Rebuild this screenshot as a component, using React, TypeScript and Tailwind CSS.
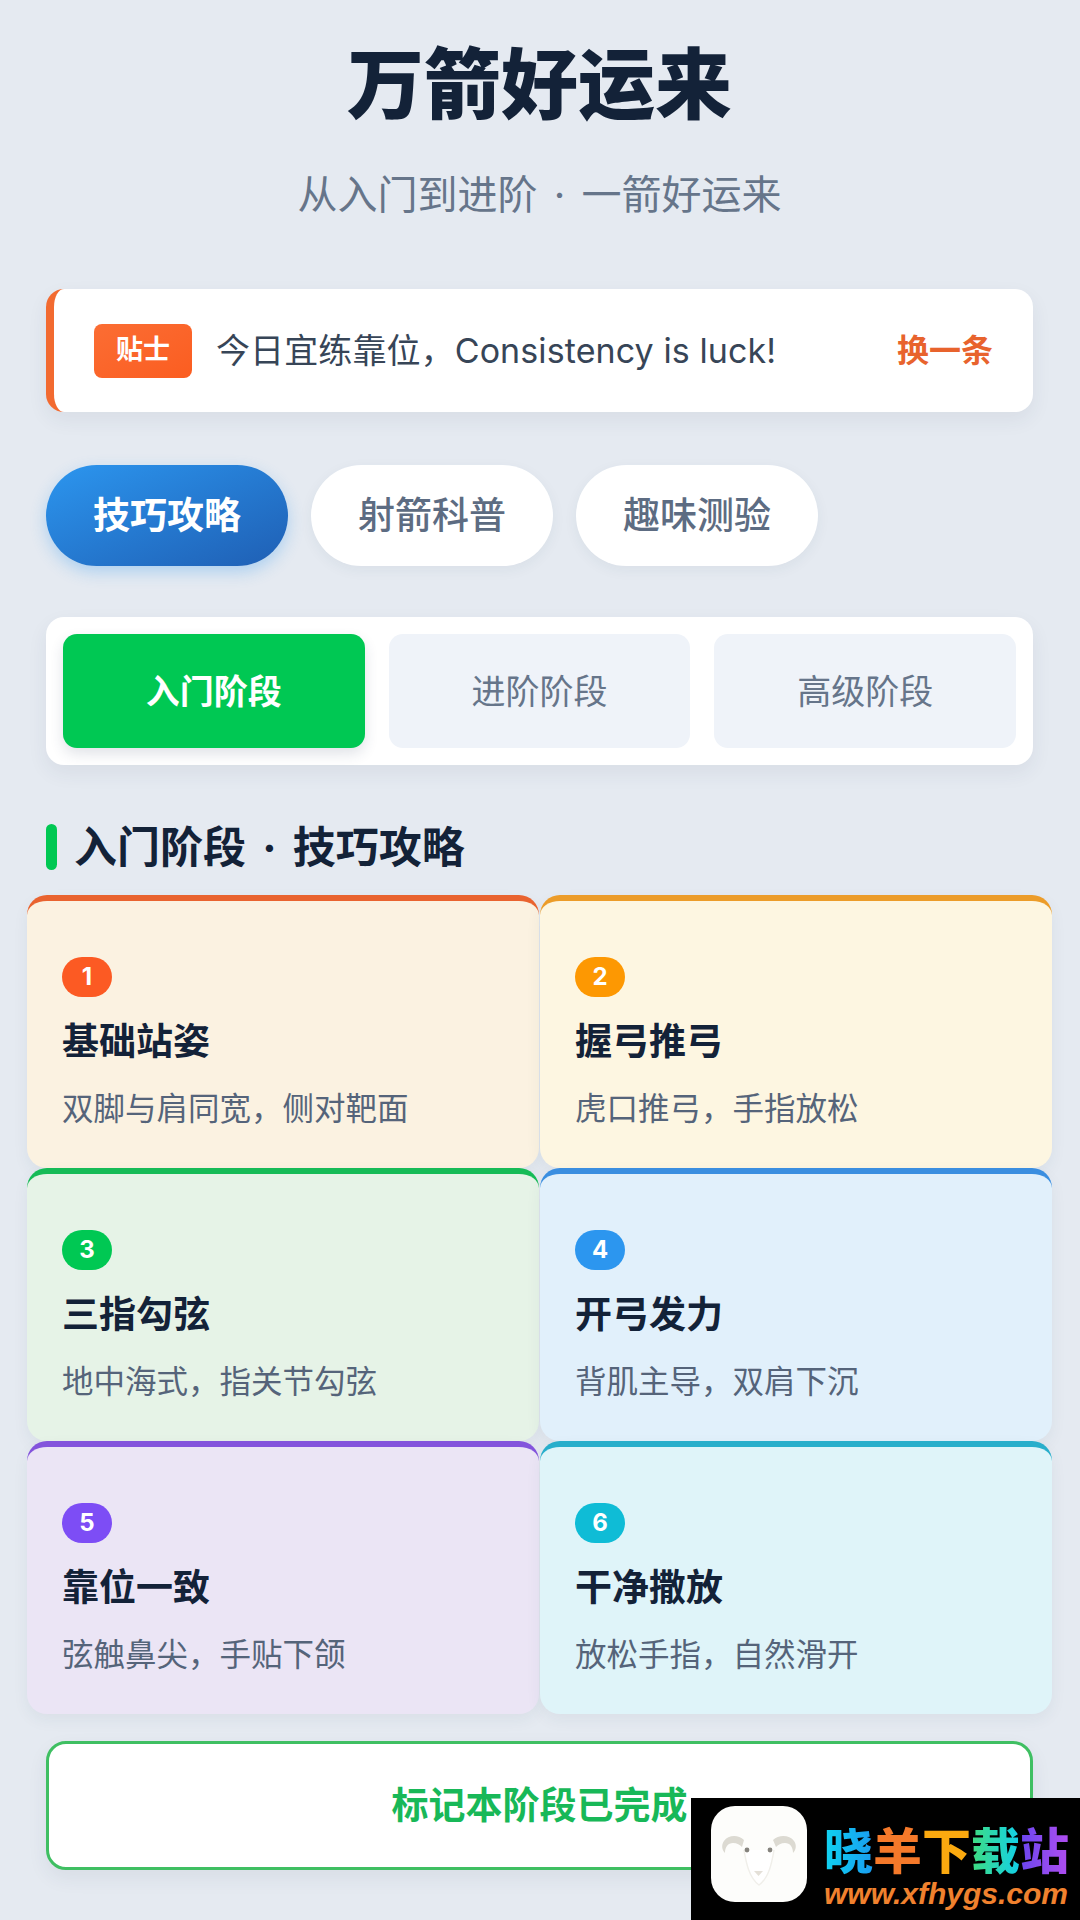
const tabs = ["技巧攻略", "射箭科普", "趣味测验"];
const stages = ["入门阶段", "进阶阶段", "高级阶段"];

const cards = [
  { n: 1, title: "基础站姿", desc: "双脚与肩同宽，侧对靶面", bg: "bg-[#fbf2e1]", top: "border-t-[#e9632f]", badge: "bg-[#fc5a23]" },
  { n: 2, title: "握弓推弓", desc: "虎口推弓，手指放松", bg: "bg-[#fdf6e1]", top: "border-t-[#ec9c29]", badge: "bg-[#fd9802]" },
  { n: 3, title: "三指勾弦", desc: "地中海式，指关节勾弦", bg: "bg-[#e6f3e7]", top: "border-t-[#16bb57]", badge: "bg-[#00c853]" },
  { n: 4, title: "开弓发力", desc: "背肌主导，双肩下沉", bg: "bg-[#e1f0fb]", top: "border-t-[#3a8ee0]", badge: "bg-[#2c96ef]" },
  { n: 5, title: "靠位一致", desc: "弦触鼻尖，手贴下颌", bg: "bg-[#ebe5f5]", top: "border-t-[#8354dc]", badge: "bg-[#7d4df5]" },
  { n: 6, title: "干净撒放", desc: "放松手指，自然滑开", bg: "bg-[#dff4f9]", top: "border-t-[#28aecb]", badge: "bg-[#0fbcd6]" },
];

const SheepLogo = () => (
  <svg viewBox="0 0 96 96" className="w-24 h-24 shrink-0">
    <rect width="96" height="96" rx="24" fill="#fdfdfb" />
    <path d="M33 34c-6-6-16-5-20 1-3 4-2 9 1 12 0-6 3-10 8-10 4 0 7 2 9 4z" fill="#dcdad2" />
    <path d="M62 34c6-6 17-5 21 1 3 4 2 9-1 12 0-6-3-10-8-10-4 0-7 2-9 4z" fill="#dcdad2" />
    <path d="M33 44c2 12 5 28 15 35 10-7 13-23 15-35" fill="#ffffff" stroke="#f0efea" strokeWidth="1.5" />
    <circle cx="36" cy="44" r="2.4" fill="#85837d" />
    <circle cx="59" cy="44" r="2.4" fill="#85837d" />
    <path d="M43 65h9l-4.500 5z" fill="#e4e0d8" />
  </svg>
);

const Watermark = () => (
  <div className="absolute right-0 bottom-0 w-[389px] h-[122px] bg-black flex items-start pl-[20px] pt-[8px] gap-[17px]">
    <SheepLogo />
    <div className="flex flex-col pt-[19px]">
      <div className="flex text-[49px] leading-[54px] font-black">
        <span className="bg-linear-to-r from-[#12d3f0] to-[#1a9cf0] bg-clip-text text-transparent">晓</span>
        <span className="text-[#f5792a]">羊</span>
        <span className="text-[#fba90f]">下</span>
        <span className="bg-linear-to-r from-[#3fdc7c] to-[#12cfe8] bg-clip-text text-transparent">载</span>
        <span className="bg-linear-to-r from-[#6a45ee] to-[#b04cf0] bg-clip-text text-transparent">站</span>
      </div>
      <div className="text-[30px] leading-[30px] font-bold italic text-[#f0812e] font-['Liberation_Sans'] whitespace-nowrap">
        www.xfhygs.com
      </div>
    </div>
  </div>
);

const App = () => {
  return (
    <div className="relative w-[1080px] h-[1920px] overflow-hidden bg-[#e5eaf1] font-['Inter','Noto_Sans_CJK_SC',sans-serif]">
      <div className="pl-[46px] pr-[47px] pt-[35px]">
        <h1 className="text-center text-[77px] leading-[100px] font-black text-[#132238]">万箭好运来</h1>
        <p className="mt-[30px] text-center text-[40px] leading-[60px] text-[#66758a]">
          从入门到进阶<span className="mx-[5px]"> · </span>一箭好运来
        </p>

        {/* Tip bar */}
        <div className="mt-[64px] h-[123px] flex items-center bg-white rounded-[18px] border-l-[8px] border-l-[#f26a30] pl-[40px] pr-[40px] shadow-[0_8px_20px_rgba(40,60,90,0.07)]">
          <span className="w-[98px] h-[54px] flex items-center justify-center rounded-[8px] bg-linear-to-br from-[#fb6d33] to-[#fb5d20] text-white text-[27px] font-bold">
            贴士
          </span>
          <span className="ml-[24px] flex-1 text-[34px] tracking-[0.1px] text-[#374557]">今日宜练靠位，Consistency is luck!</span>
          <span className="text-[32px] font-semibold text-[#e8632d]">换一条</span>
        </div>

        {/* Category tabs */}
        <div className="mt-[53px] flex gap-[23px]">
          {tabs.map((tab, i) => (
            <div
              key={tab}
              className={
                i === 0
                  ? "w-[242px] h-[101px] flex items-center justify-center rounded-full text-[37px] font-bold text-white bg-linear-to-br from-[#2c96ef] to-[#1f5fb4] shadow-[0_6px_16px_rgba(44,150,239,0.3)]"
                  : "w-[242px] h-[101px] flex items-center justify-center rounded-full text-[37px] font-medium text-[#5d6c82] bg-white shadow-[0_4px_14px_rgba(40,60,90,0.06)]"
              }
            >
              {tab}
            </div>
          ))}
        </div>

        {/* Stage switch */}
        <div className="mt-[51px] h-[148px] p-[17px] grid grid-cols-3 gap-[24px] bg-white rounded-[18px] shadow-[0_8px_20px_rgba(40,60,90,0.07)]">
          {stages.map((stage, i) => (
            <div
              key={stage}
              className={
                i === 0
                  ? "flex items-center justify-center rounded-[14px] text-[34px] font-bold text-white bg-[#00c853] shadow-[0_6px_14px_rgba(40,60,90,0.14)]"
                  : "flex items-center justify-center rounded-[14px] text-[34px] text-[#66758a] bg-[#eff3f9]"
              }
            >
              {stage}
            </div>
          ))}
        </div>

        {/* Section heading */}
        <div className="mt-[57px] h-[50px] flex items-center gap-[17px]">
          <span className="w-[11px] h-[46px] rounded-full bg-[#00c853]" />
          <h2 className="text-[43px] leading-[50px] font-bold text-[#132238]">
            入门阶段<span className="mx-[6px]"> · </span>技巧攻略
          </h2>
        </div>
      </div>

      {/* Step cards */}
      <div className="mt-[23px] ml-[27px] mr-[28px] grid grid-cols-2 gap-x-px auto-rows-[273px]">
        {cards.map((card) => (
          <div
            key={card.n}
            className={`${card.bg} ${card.top} border-t-[6px] rounded-[20px] pt-[56px] pl-[35px] shadow-[0_6px_16px_rgba(40,60,90,0.06)]`}
          >
            <div className={`${card.badge} w-[50px] h-[40px] rounded-full flex items-center justify-center text-white text-[24px] font-bold`}>
              {card.n}
            </div>
            <h3 className="mt-[21px] text-[37px] leading-[48px] font-bold text-[#132238]">{card.title}</h3>
            <p className="mt-[21px] text-[31.500px] leading-[44px] text-[#55647a]">{card.desc}</p>
          </div>
        ))}
      </div>

      <div className="mt-[27px] ml-[46px] mr-[47px] h-[129px] flex items-center justify-center bg-white border-[3px] border-[#3fbf62] rounded-[20px] text-[37px] font-bold text-[#18b858] shadow-[0_8px_20px_rgba(40,60,90,0.07)]">
        标记本阶段已完成
      </div>

      <Watermark />
    </div>
  );
};

export default App;
